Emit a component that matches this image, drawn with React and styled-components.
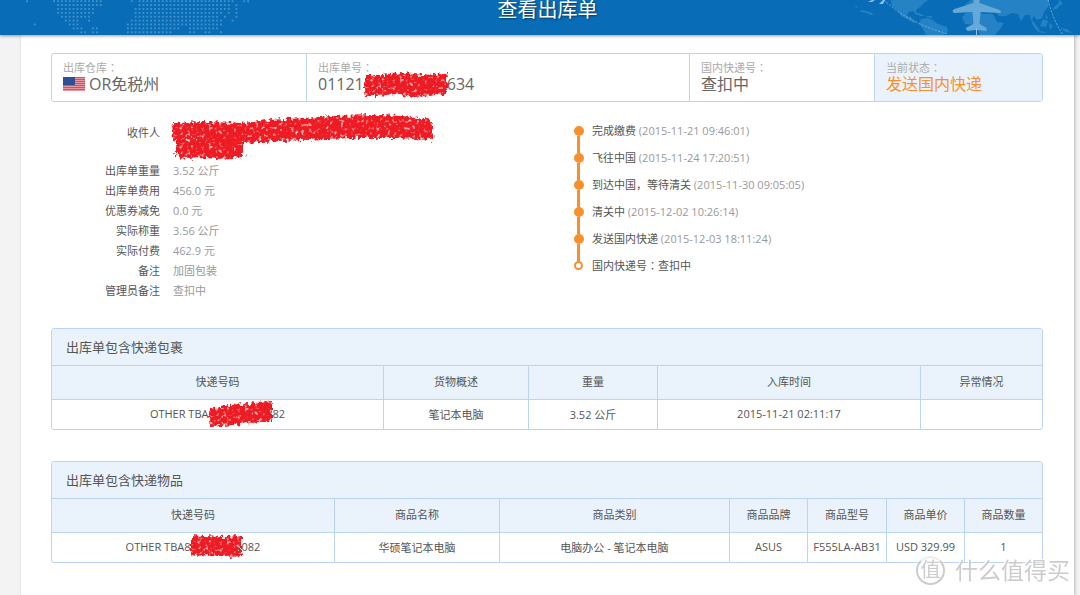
import React from 'react';
import styled, { createGlobalStyle } from 'styled-components';

const GlobalStyle = createGlobalStyle`
  * {
    box-sizing: border-box;
  }
  body {
    margin: 0;
    background: #f3f3f3;
    color: #555;
    font-family: 'Open Sans', 'Noto Sans CJK SC', sans-serif;
    font-size: 11px;
  }
`;
const Header = styled.header`
  position: relative;
  height: 35px;
  padding-left: 15px;
  display: grid;
  grid-template-columns: 1fr auto 1fr;
  background: #086db6;
  box-shadow: 0 1px 3px rgba(0, 0, 0, 0.4);
`;
const HeaderArt = styled.svg`
  display: block;
  justify-self: ${(props) => (props.$right ? 'end' : 'start')};
`;
const Title = styled.h1`
  margin: 0;
  font-size: 20px;
  font-weight: 400;
  line-height: 20px;
  color: #fff;
  text-shadow: 1px 1px 2px rgba(0, 0, 0, 0.5);
`;
const Panel = styled.main`
  min-height: calc(100vh - 35px);
  margin: 0 6px 0 21px;
  padding: 18px 31px 31px 30px;
  background: #fff;
  box-shadow: 1px 0 3px rgba(0, 0, 0, 0.25);
`;
const Summary = styled.div`
  display: grid;
  grid-template-columns: 254px 1fr 185px 168px;
  border: 1px solid #b9d5f0;
  border-radius: 3px;
`;
const SummaryCell = styled.div`
  padding: 7px 11px;
  border-left: ${(props) => (props.$first ? 'none' : '1px solid #b9d5f0')};
  background: ${(props) => (props.$active ? '#eaf3fb' : 'transparent')};
`;
const SummaryLabel = styled.div`
  line-height: 13px;
  color: #aaa;
`;
const SummaryValue = styled.div`
  display: flex;
  align-items: center;
  font-size: 16px;
  line-height: 20px;
  color: ${(props) => (props.$active ? '#f7902b' : '#666')};
`;
const CenteredMark = styled.span`
  font-family: 'Noto Sans CJK TC', sans-serif;
`;
const FlagIcon = styled.svg`
  margin-right: 4px;
`;
const Overview = styled.div`
  display: grid;
  grid-template-columns: 523px 1fr;
  align-items: start;
  padding: 15px 0 27px;
`;
const Details = styled.dl`
  margin: 0;
  padding-top: 6px;
`;
const DetailRow = styled.div`
  display: grid;
  grid-template-columns: 109px 1fr;
  column-gap: 13px;
  line-height: ${(props) => (props.$tall ? '19px' : '20px')};
`;
const DetailLabel = styled.dt`
  text-align: right;
`;
const DetailValue = styled.dd`
  margin: 0;
  color: #999;
`;
const Timeline = styled.ol`
  margin: 0;
  padding: 0;
  list-style: none;
`;
const Step = styled.li`
  display: grid;
  grid-template-columns: 9px 1fr;
  column-gap: 9px;
  line-height: 27px;
`;
const Marker = styled.span`
  display: flex;
  flex-direction: column;
  align-items: center;
`;
const Track = styled.span`
  flex: 1;
  width: 3px;
  background: ${(props) => (props.$hidden ? 'transparent' : '#f7902b')};
`;
const Dot = styled.span`
  width: 9px;
  height: 9px;
  border: ${(props) => (props.$open ? '2px' : '5px')} solid #f7902b;
  border-radius: 50%;
`;
const Time = styled.time`
  color: #999;
`;
const Card = styled.section`
  border: 1px solid #b9d5f0;
  border-radius: 3px;
  overflow: hidden;
  & + & {
    margin-top: 31px;
  }
`;
const CardTitle = styled.h2`
  margin: 0;
  padding: 0 14px;
  font-size: 13px;
  font-weight: 400;
  line-height: 36px;
  background: #eaf3fb;
`;
const Table = styled.table`
  width: 100%;
  table-layout: fixed;
  border-collapse: separate;
  border-spacing: 0;
  text-align: center;
`;
const HeadCell = styled.th`
  width: ${(props) => (props.$width ? `${props.$width}px` : 'auto')};
  height: 35px;
  padding: 0 0 3px;
  font-weight: 400;
  background: #eaf3fb;
  border: solid #b9d5f0;
  border-width: 1px 0 1px 1px;
  &:first-child {
    border-left: none;
  }
`;
const Cell = styled.td`
  height: 29px;
  padding: 0 0 2px;
  white-space: nowrap;
  border-left: 1px solid #b9d5f0;
  &:first-child {
    border-left: none;
  }
`;
const Redacted = styled.span`
  position: relative;
  display: inline-block;
  width: ${(props) => props.$width}px;
  height: 10px;
`;
const Scribble = styled.svg`
  position: absolute;
  left: 0;
  top: 0;
  overflow: visible;
`;
const Hidden = styled.svg`
  position: absolute;
`;
const Watermark = styled.div`
  position: fixed;
  right: 10px;
  bottom: 10px;
  display: flex;
  align-items: center;
  gap: 10px;
  font-size: 23px;
  line-height: 30px;
  color: #ccc;
  text-shadow: -1px -1px 0 #fff;
  pointer-events: none;
`;
const Seal = styled.span`
  width: 29px;
  height: 29px;
  border: 2px solid #ccc;
  border-top-color: #eee;
  border-radius: 50%;
  background: rgba(255, 255, 255, 0.8);
  font-size: 20px;
  line-height: 24px;
  text-align: center;
`;

// [row, first column, last column]
const dotRuns = [
  [0, 1, 1], [0, 8, 20], [0, 28, 28], [0, 30, 54], [0, 57, 58],
  [1, 9, 18], [1, 19, 20], [1, 30, 53], [1, 55, 55],
  [2, 9, 18], [2, 29, 51], [2, 52, 53], [2, 55, 55],
  [3, 9, 18], [3, 29, 51], [3, 53, 53], [3, 55, 55],
  [4, 10, 17], [4, 29, 50], [4, 52, 52], [4, 55, 55],
  [5, 11, 14], [5, 17, 17], [5, 28, 51], [5, 54, 54],
  [6, 3, 3], [6, 12, 14], [6, 27, 51],
  [7, 13, 15], [7, 18, 19], [7, 27, 40], [7, 43, 50],
  [8, 15, 16], [8, 18, 19], [8, 27, 38], [8, 43, 44], [8, 47, 48], [8, 51, 51],
];

const DottedMap = () => (
  <HeaderArt width="260" height="35" aria-hidden="true">
    <g fill="#4394ce">
      {dotRuns.map(([row, from, to]) =>
        Array.from({ length: to - from + 1 }, (_, i) => (
          <rect
            key={`${row}-${from + i}`}
            x={7.2 + (from + i) * 3.88}
            y={0.3 + row * 3.88}
            width="1.8"
            height="1.8"
          />
        ))
      )}
    </g>
  </HeaderArt>
);

const WorldMap = () => (
  <HeaderArt $right width="230" height="35" viewBox="0 0 230 35" aria-hidden="true">
    <g fill="#2583c5">
      <path d="M41 0h37l-4 3-4 4-4 3v4l-3-3-5 1-1 4 4 1 2 3 4 2-3 1-7-4-6-3-4-6-5-4z" />
      <path d="M65 12l6 2 4 2-4 0-6-2zM76 16l6 0 0 2-5-1z" />
      <path d="M71 19l7-1 6 3 4 3 9 3 1 4-4 4H76l-3-6-4-5z" />
      <path d="M112 17l4-4 10-2 8 3 9 0 4 8 7 1-4 6-5 6h-15l-4-10-11-1z" />
      <path d="M115 5l6-5h78l-1 7-4 5-2 6-5 2-3-4-3 5-1-6-5 0-4 6-3-7-6-1-6 3-7 0-5-6-9-1-9 1z" />
      <path d="M202 10l3-4 4-3 2 1-4 5zM210 0l3 4-2 1-3-3zM182 20l4 5 4 5-3 1-5-7zM193 19l5 2-2 6-6-1zM199 23l4 3-3 4zM195 15l3 2-1 3zM188 31l8 1-1 1-8-1zM210 28l7 1 5 4-6-1z" />
      <path d="M5 6l3 1-2 1zM10 10l6 1 4 1 4 3-3 0-4-2-6-1z" />
    </g>
    <path
      d="M34 0Q58 23 98 34M198 0Q203 20 213 35"
      fill="none"
      stroke="#6fb0dd"
      strokeWidth="1"
      strokeDasharray="2 1.5"
    />
    <path d="M18 2l4-2h3l-3 2zM29 4l4-4h2l-2 4z" fill="#8fc2e6" />
    <path
      d="M123.5 0h6v3l20 7c2 1 2 3 0 3l-19-1-1 12 7 4v3l-8-1h-3l-8 1-2-3 8-4-1-12-18 1c-3-1-2-3 0-4l19-6z"
      fill="#66a8d8"
    />
    <path d="M126.5 28v7" stroke="#8fc2e6" strokeWidth="1" />
  </HeaderArt>
);

const UsFlag = () => (
  <FlagIcon width="22" height="14" viewBox="0 0 22 14" aria-hidden="true">
    <rect width="22" height="14" fill="#f0b8c0" />
    {[0, 2, 4, 6, 8, 10, 12].map((y) => (
      <rect key={y} y={y} width="22" height="1.3" fill="#dc4b60" />
    ))}
    <rect width="12" height="8" fill="#2f4f93" />
  </FlagIcon>
);

// wipes out private digits with a red marker stroke
const Redaction = ({ width, path }) => (
  <Redacted $width={width}>
    <Scribble width={width} height="10" aria-hidden="true">
      <path d={path} fill="#ed1c24" filter="url(#marker)" />
    </Scribble>
  </Redacted>
);

const MarkerFilter = () => (
  <Hidden width="0" height="0" aria-hidden="true">
    <filter
      id="marker"
      x="-5%"
      y="-20%"
      width="110%"
      height="140%"
      colorInterpolationFilters="sRGB"
    >
      <feTurbulence type="fractalNoise" baseFrequency="0.28" numOctaves="2" seed="4" result="noise" />
      <feDisplacementMap
        in="SourceGraphic"
        in2="noise"
        scale="8"
        xChannelSelector="G"
        yChannelSelector="B"
        result="rough"
      />
      <feColorMatrix
        in="noise"
        type="matrix"
        values="0 0 0 0 0  0 0 0 0 0  0 0 0 0 0  3 0 0 0 -0.3"
        result="grain"
      />
      <feComposite in="rough" in2="grain" operator="in" result="inked" />
      <feGaussianBlur in="inked" stdDeviation="0.4" />
    </filter>
  </Hidden>
);

const details = [
  ['出库单重量', '3.52 公斤'],
  ['出库单费用', '456.0 元'],
  ['优惠券减免', '0.0 元'],
  ['实际称重', '3.56 公斤'],
  ['实际付费', '462.9 元'],
  ['备注', '加固包装'],
  ['管理员备注', '查扣中'],
];

const steps = [
  ['完成缴费', '2015-11-21 09:46:01'],
  ['飞往中国', '2015-11-24 17:20:51'],
  ['到达中国，等待清关', '2015-11-30 09:05:05'],
  ['清关中', '2015-12-02 10:26:14'],
  ['发送国内快递', '2015-12-03 18:11:24'],
];

const parcelColumns = [
  ['快递号码'],
  ['货物概述', 145],
  ['重量', 129],
  ['入库时间', 263],
  ['异常情况', 122],
];

const goodsColumns = [
  ['快递号码'],
  ['商品名称', 165],
  ['商品类别', 230],
  ['商品品牌', 78],
  ['商品型号', 79],
  ['商品单价', 78],
  ['商品数量', 78],
];

const Colon = () => <CenteredMark>：</CenteredMark>;

const TimelineStep = ({ first, last, children }) => (
  <Step>
    <Marker>
      <Track $hidden={first} />
      <Dot $open={last} />
      <Track $hidden={last} />
    </Marker>
    <span>{children}</span>
  </Step>
);

const DataCard = ({ id, title, columns, cells }) => (
  <Card>
    <CardTitle id={id}>{title}</CardTitle>
    <Table aria-labelledby={id}>
      <thead>
        <tr>
          {columns.map(([name, width]) => (
            <HeadCell key={name} $width={width} scope="col">
              {name}
            </HeadCell>
          ))}
        </tr>
      </thead>
      <tbody>
        <tr>
          {cells.map((cell, i) => (
            <Cell key={i}>{cell}</Cell>
          ))}
        </tr>
      </tbody>
    </Table>
  </Card>
);

const App = () => {
  return (
    <>
      <GlobalStyle />
      <MarkerFilter />
      <Header>
        <DottedMap />
        <Title>查看出库单</Title>
        <WorldMap />
      </Header>
      <Panel>
        <Summary>
          <SummaryCell $first>
            <SummaryLabel>
              出库仓库
              <Colon />
            </SummaryLabel>
            <SummaryValue>
              <UsFlag />
              OR免税州
            </SummaryValue>
          </SummaryCell>
          <SummaryCell>
            <SummaryLabel>
              出库单号
              <Colon />
            </SummaryLabel>
            <SummaryValue>
              01121
              <Redaction
                width={83}
                path="M1 -5L12 -3 25 -5 40 -6 60 -4 83 -6V14L66 17 50 18 30 15 15 17 1 17Z"
              />
              634
            </SummaryValue>
          </SummaryCell>
          <SummaryCell>
            <SummaryLabel>
              国内快递号
              <Colon />
            </SummaryLabel>
            <SummaryValue>查扣中</SummaryValue>
          </SummaryCell>
          <SummaryCell $active>
            <SummaryLabel>
              当前状态
              <Colon />
            </SummaryLabel>
            <SummaryValue $active>发送国内快递</SummaryValue>
          </SummaryCell>
        </Summary>
        <Overview>
          <Details>
            <DetailRow $tall>
              <DetailLabel>收件人</DetailLabel>
              <DetailValue>
                <div>
                  <Redaction
                    width={260}
                    path="M-1 -4L30 -5 68 -4 95 -7 130 -9 160 -11 200 -12 230 -11 259 -7V13L225 11 180 11 130 13 70 16 0 13Z"
                  />
                  ,
                </div>
                <div>
                  <Redaction width={72} path="M3 -7H69V11L50 13 30 12 15 13 3 10Z" />,
                </div>
              </DetailValue>
            </DetailRow>
            {details.map(([label, value]) => (
              <DetailRow key={label}>
                <DetailLabel>{label}</DetailLabel>
                <DetailValue>{value}</DetailValue>
              </DetailRow>
            ))}
          </Details>
          <Timeline>
            {steps.map(([text, time], i) => (
              <TimelineStep key={text} first={i === 0}>
                {text} <Time>({time})</Time>
              </TimelineStep>
            ))}
            <TimelineStep last>
              国内快递号
              <Colon />
              查扣中
            </TimelineStep>
          </Timeline>
        </Overview>
        <DataCard
          id="parcels"
          title="出库单包含快递包裹"
          columns={parcelColumns}
          cells={[
            <>
              OTHER TBA
              <Redaction width={64} path="M1 1L20 -3 40 -4 63 -7V13L40 15 25 17 1 19Z" />
              82
            </>,
            '笔记本电脑',
            '3.52 公斤',
            '2015-11-21 02:11:17',
            '',
          ]}
        />
        <DataCard
          id="goods"
          title="出库单包含快递物品"
          columns={goodsColumns}
          cells={[
            <>
              OTHER TBA8
              <Redaction width={51} path="M0 -6L15 -5 30 -4 50 -5V15L36 16 20 14 0 15Z" />
              082
            </>,
            '华硕笔记本电脑',
            '电脑办公 - 笔记本电脑',
            'ASUS',
            'F555LA-AB31',
            'USD 329.99',
            '1',
          ]}
        />
      </Panel>
      <Watermark>
        <Seal>值</Seal>
        <span>什么值得买</span>
      </Watermark>
    </>
  );
};

export default App;
